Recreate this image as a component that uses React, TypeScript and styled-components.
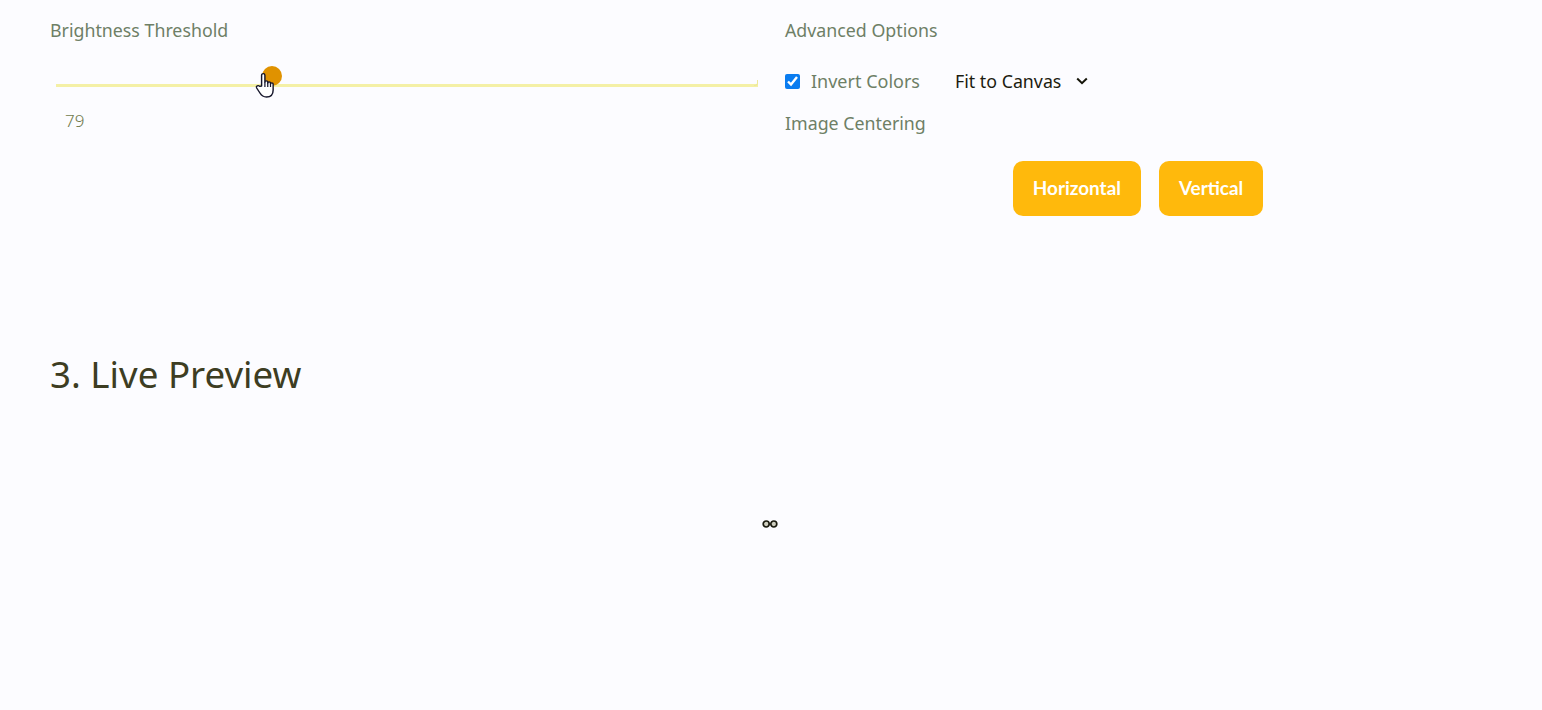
import React from "react";
import styled, { createGlobalStyle } from "styled-components";

const Global = createGlobalStyle`
  html, body { margin: 0; padding: 0; height: 100%; background: #fcfcff; overflow: hidden; }
  body { font-family: "Noto Sans", "Open Sans", sans-serif; }
`;

const Page = styled.main`
  height: 710px;
  padding: 19px 51px 0 50px;
  box-sizing: border-box;
  display: flex;
  flex-direction: column;
`;

const Controls = styled.section`
  display: grid;
  grid-template-columns: 715px 706px;
  column-gap: 20px;
  height: 197px;
`;

const Column = styled.div`
  display: flex;
  flex-direction: column;
  min-width: 0;
`;

const Label = styled.label`
  display: block;
  font-size: 17.8px;
  line-height: 22px;
  color: #6e7f66;
`;

const SliderWrap = styled.div`
  position: relative;
  margin: 30px 7px 0 6px;
  height: 28px;
  &::after {
    content: "";
    position: absolute;
    right: 0;
    top: 9px;
    width: 3px;
    height: 5px;
    border-right: 1px solid #ece89a;
    border-bottom: 1px solid #ece89a;
    border-bottom-right-radius: 3px;
  }
`;

const Range = styled.input`
  -webkit-appearance: none;
  appearance: none;
  display: block;
  width: 100%;
  height: 20px;
  margin: 0;
  background: transparent;
  &::-webkit-slider-runnable-track {
    height: 3px;
    margin-top: 9px;
    background: #f4f0a6;
  }
  &::-webkit-slider-thumb {
    -webkit-appearance: none;
    width: 20px;
    height: 20px;
    margin-top: -18px;
    border-radius: 50%;
    background: #e09200;
  }
`;

const Cursor = styled.svg`
  position: absolute;
  left: 199px;
  top: 1px;
  width: 22px;
  height: 27px;
  overflow: visible;
`;

const Value = styled.div`
  margin: 10px 0 0 15px;
  font-size: 17px;
  font-weight: 300;
  line-height: 24px;
  color: #6f7a4c;
`;

const OptionRow = styled.div`
  display: flex;
  align-items: center;
  margin-top: 28px;
  height: 24px;
`;

const Check = styled.input`
  width: 15px;
  height: 15px;
  margin: 0 11px 0 0;
  accent-color: #0a7cf0;
`;

const CheckLabel = styled(Label)`
  margin-right: 35px;
  font-size: 18px;
`;

const Select = styled.select`
  appearance: none;
  -webkit-appearance: none;
  font-family: inherit;
  font-size: 17.8px;
  color: #1c1c10;
  background: transparent url("data:image/svg+xml;utf8,<svg xmlns='http://www.w3.org/2000/svg' width='12' height='8' viewBox='0 0 12 8'><path d='M1.2 1.5 6 6.2l4.8-4.7' fill='none' stroke='%23141408' stroke-width='2'/></svg>") no-repeat right 1px center;
  border: none;
  outline: none;
  padding: 0;
  height: 24px;
  width: 134px;
`;

const SubLabel = styled(Label)`
  margin-top: 19px;
`;

const ButtonRow = styled.div`
  display: flex;
  justify-content: center;
  gap: 18px;
  margin-top: 27px;
`;

const Button = styled.button`
  height: 55px;
  padding: 0 20px 2px;
  border: none;
  border-radius: 10px;
  background: #ffb90c;
  color: #fff;
  font-family: "Lato", sans-serif;
  font-weight: 700;
  font-size: 18.9px;
  line-height: 53px;
`;

const Heading = styled.h2`
  margin: 130px 0 0;
  font-size: 36.7px;
  line-height: 56px;
  font-weight: 400;
  color: #3d3d22;
`;

const Preview = styled.div`
  display: flex;
  justify-content: center;
  margin-top: 118px;
  padding-right: 1px;
`;

const Spinner = styled.svg`
  width: 16px;
  height: 8px;
`;

export default function App() {
  return (
    <>
      <Global />
      <Page>
        <Controls>
          <Column>
            <Label>Brightness Threshold</Label>
            <SliderWrap>
              <Range type="range" min={0} max={255} defaultValue={77} />
              <Cursor viewBox="0 0 20 27" preserveAspectRatio="none">
                <path
                  d="M6 14V3.2c0-2 3-2 3 0V10c0-1.6 2.6-1.6 2.6 0v1c0-1.5 2.5-1.5 2.5 0v1c0-1.4 2.4-1.4 2.4 0v6c0 4-2 7-6 7-3.4 0-4.6-1.4-6-4l-3-5c-1-1.8 1.4-3.3 2.8-1.6z"
                  fill="#fff"
                  stroke="#15152a"
                  strokeWidth="1.3"
                  strokeLinejoin="round"
                />
                <path d="M9 10v5M11.6 11v4M14.1 12v3" stroke="#15152a" strokeWidth="1.1" fill="none" />
              </Cursor>
            </SliderWrap>
            <Value>79</Value>
          </Column>
          <Column>
            <Label>Advanced Options</Label>
            <OptionRow>
              <Check type="checkbox" defaultChecked />
              <CheckLabel>Invert Colors</CheckLabel>
              <Select defaultValue="fit">
                <option value="fit">Fit to Canvas</option>
              </Select>
            </OptionRow>
            <SubLabel>Image Centering</SubLabel>
            <ButtonRow>
              <Button>Horizontal</Button>
              <Button>Vertical</Button>
            </ButtonRow>
          </Column>
        </Controls>
        <Heading>3. Live Preview</Heading>
        <Preview>
          <Spinner viewBox="0 0 16 8">
            <circle cx="4.2" cy="4" r="3" fill="#cfcfc0" stroke="#1c1c10" strokeWidth="1.7" />
            <circle cx="11.8" cy="4" r="3" fill="#cfcfc0" stroke="#1c1c10" strokeWidth="1.7" />
          </Spinner>
        </Preview>
      </Page>
    </>
  );
}
